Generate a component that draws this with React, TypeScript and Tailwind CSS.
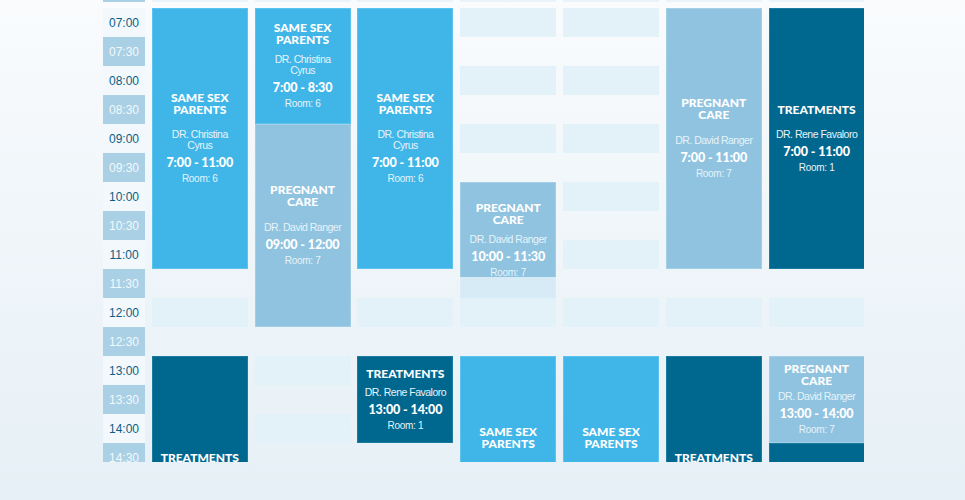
import React from 'react';

type ev = {
    col: number,
    row: number,
    span: number,
    kind: 'same' | 'preg' | 'treat',
    doctor: string,
    time: string,
    room: string,
    gap: number,
    veil?: boolean,
}

const titles = {
    same: 'SAME SEX\nPARENTS',
    preg: 'PREGNANT\nCARE',
    treat: 'TREATMENTS',
}

const tones = {
    same: 'bg-[#40b6e8] border-[#5cc2ee]',
    preg: 'bg-[#8fc3df] border-[#a3cfe6]',
    treat: 'bg-[#00688f] border-[#1b7ca0]',
}

const times = [
    '07:00', '07:30', '08:00', '08:30', '09:00', '09:30', '10:00', '10:30',
    '11:00', '11:30', '12:00', '12:30', '13:00', '13:30', '14:00', '14:30',
    '15:00', '15:30', '16:00', '16:30',
]

const cyrus = 'DR. Christina\nCyrus'

const events: ev[] = [
    { col: 1, row: 0, span: 9, kind: 'same', doctor: cyrus, time: '7:00 - 11:00', room: 'Room: 6', gap: 14 },
    { col: 1, row: 12, span: 9, kind: 'treat', doctor: 'DR. Rene Favaloro', time: '13:00 - 17:00', room: 'Room: 1', gap: 14 },
    { col: 2, row: 0, span: 4, kind: 'same', doctor: cyrus, time: '7:00 - 8:30', room: 'Room: 6', gap: 9 },
    { col: 2, row: 4, span: 7, kind: 'preg', doctor: 'DR. David Ranger', time: '09:00 - 12:00', room: 'Room: 7', gap: 15 },
    { col: 3, row: 0, span: 9, kind: 'same', doctor: cyrus, time: '7:00 - 11:00', room: 'Room: 6', gap: 14 },
    { col: 3, row: 12, span: 3, kind: 'treat', doctor: 'DR. Rene Favaloro', time: '13:00 - 14:00', room: 'Room: 1', gap: 8 },
    { col: 4, row: 6, span: 4, kind: 'preg', doctor: 'DR. David Ranger', time: '10:00 - 11:30', room: 'Room: 7', gap: 9, veil: true },
    { col: 4, row: 12, span: 8, kind: 'same', doctor: cyrus, time: '13:00 - 17:00', room: 'Room: 6', gap: 14 },
    { col: 5, row: 12, span: 8, kind: 'same', doctor: cyrus, time: '13:00 - 17:00', room: 'Room: 6', gap: 14 },
    { col: 6, row: 0, span: 9, kind: 'preg', doctor: 'DR. David Ranger', time: '7:00 - 11:00', room: 'Room: 7', gap: 15 },
    { col: 6, row: 12, span: 9, kind: 'treat', doctor: 'DR. Rene Favaloro', time: '13:00 - 17:00', room: 'Room: 1', gap: 14 },
    { col: 7, row: 0, span: 9, kind: 'treat', doctor: 'DR. Rene Favaloro', time: '7:00 - 11:00', room: 'Room: 1', gap: 14 },
    { col: 7, row: 12, span: 3, kind: 'preg', doctor: 'DR. David Ranger', time: '13:00 - 14:00', room: 'Room: 7', gap: 5 },
    { col: 7, row: 15, span: 8, kind: 'treat', doctor: 'DR. Rene Favaloro', time: '14:30 - 18:30', room: 'Room: 1', gap: 14 },
]

const covered = (col: number, row: number) =>
    events.some(e => e.col === col && row >= e.row && row < e.row + e.span)

const EventBox: React.FC<{ e: ev }> = ({ e }) => (
    <div
        className={`relative flex flex-col items-center justify-center border text-center text-white whitespace-pre ${tones[e.kind]}`}
        style={{ gridColumn: e.col + 1, gridRow: `${e.row + 1} / span ${e.span}` }}
    >
        <p className="font-['Lato',sans-serif] font-black text-[12px] leading-[12px]">
            {titles[e.kind]}
        </p>
        <p className="font-['Liberation_Sans',Arial,sans-serif] text-[10.5px] leading-[11px] tracking-[-0.5px] text-[#e6f3fa]" style={{ marginTop: e.gap - 1 }}>
            {e.doctor}
        </p>
        <p className="mt-[4px] font-['Lato',sans-serif] font-black text-[12.5px] leading-[16px] tracking-[-0.1px]">
            {e.time}
        </p>
        <p className="mt-[2px] font-['Liberation_Sans',Arial,sans-serif] text-[10px] leading-[12px] tracking-[-0.3px] text-[#e6f3fa]">
            {e.room}
        </p>
        {e.veil ? <div className="absolute -inset-x-px -bottom-px h-[21px] bg-[#dff0f8]/90" /> : null}
    </div>
)

export default function App() {
    return (
        <div className="w-[965px] h-[500px] overflow-hidden bg-gradient-to-b from-[#f9fbfd] to-[#e6f0f6]">
            <div className="ml-[103px] w-[761px] h-[462px] overflow-hidden">
                <div className="grid grid-cols-[42px_repeat(7,96px)] gap-x-[6.8px] h-[2px]">
                    <div className="bg-[#a9d0e4]" />
                    {[1, 2, 3, 4, 5, 6, 7].map(c => <div key={c} className="bg-[#e9f3f9]" />)}
                </div>
                <div className="mt-[6px] grid grid-cols-[42px_repeat(7,96px)] auto-rows-[29px] gap-x-[6.8px]">
                    {times.map((t, r) => (
                        <div
                            key={t}
                            className={`flex items-center justify-center font-['Liberation_Sans',Arial,sans-serif] text-[12px] ${r % 2 === 0 ? 'bg-[#f2f8fb] text-[#0d5e86]' : 'bg-[#a9d0e4] text-[#f3f9fc]'}`}
                            style={{ gridColumn: 1, gridRow: r + 1 }}
                        >
                            {t}
                        </div>
                    ))}
                    {times.map((t, r) =>
                        [1, 2, 3, 4, 5, 6, 7].map(c =>
                            r % 2 === 0 && !covered(c, r) ? (
                                <div key={`${t}-${c}`} className="bg-[#e3f2f9]" style={{ gridColumn: c + 1, gridRow: r + 1 }} />
                            ) : null
                        )
                    )}
                    {events.map((e, i) => <EventBox e={e} key={i} />)}
                </div>
            </div>
        </div>
    )
}
